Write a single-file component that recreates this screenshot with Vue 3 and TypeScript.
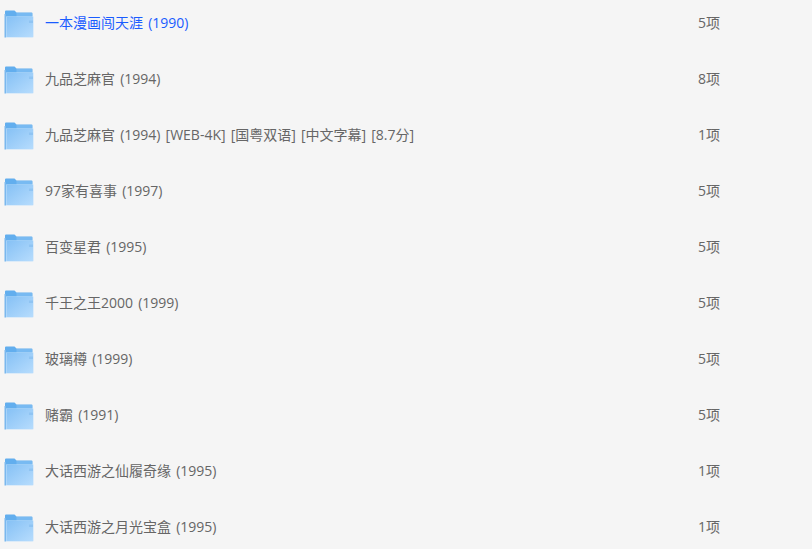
<script setup lang="ts">
interface Folder {
  name: string
  count: string
  hover?: boolean
}

const folders: Folder[] = [
  { name: '一本漫画闯天涯 (1990)', count: '5项', hover: true },
  { name: '九品芝麻官 (1994)', count: '8项' },
  { name: '九品芝麻官 (1994) [WEB-4K] [国粤双语] [中文字幕] [8.7分]', count: '1项' },
  { name: '97家有喜事 (1997)', count: '5项' },
  { name: '百变星君 (1995)', count: '5项' },
  { name: '千王之王2000 (1999)', count: '5项' },
  { name: '玻璃樽 (1999)', count: '5项' },
  { name: '赌霸 (1991)', count: '5项' },
  { name: '大话西游之仙履奇缘 (1995)', count: '1项' },
  { name: '大话西游之月光宝盒 (1995)', count: '1项' },
]
</script>

<template>
  <div class="list">
    <div v-for="f in folders" :key="f.name" class="row">
      <svg class="icon" width="30" height="28" viewBox="0 0 30 28">
        <defs>
          <linearGradient id="front" x1="0" y1="0" x2="1" y2="1">
            <stop offset="0" stop-color="#86c1f5" />
            <stop offset="1" stop-color="#b6dcfd" />
          </linearGradient>
        </defs>
        <path d="M1 27V1.500q0-1 1-1h8.500l2 2h15q1 0 1 1V7H2z" fill="#62aeee" />
        <path d="M12.500 3h15.500v4H12.500z" fill="#78baf2" />
        <path d="M0.500 4H2v23.500H0.500z" fill="#7ab8ee" />
        <path d="M2 6.500h27.500v20q0 1-1 1H2z" fill="#c3e1fb" />
        <path d="M2.500 7h26.500v20H2.500z" fill="url(#front)" />
        <path d="M25 10.500h4v2.500h-4z" fill="#8fc4f3" />
      </svg>
      <span class="name" :class="{ hover: f.hover }">{{ f.name }}</span>
      <span class="count">{{ f.count }}</span>
    </div>
  </div>
</template>

<style scoped>
.list {
  width: 812px;
  height: 549px;
  overflow: hidden;
  background: #f5f5f5;
  font-family: "Open Sans", "Noto Sans CJK SC", sans-serif;
  font-size: 14px;
  color: #666;
}

.row {
  display: flex;
  align-items: center;
  height: 56px;
  margin-top: -6px;
  margin-bottom: 6px;
  padding-left: 4px;
}

.icon {
  flex: none;
  margin-top: 3px;
}

.name {
  width: 653px;
  margin-left: 11px;
  white-space: nowrap;
  word-spacing: 1.5px;
}

.hover {
  color: #1a5cff;
}

.count {
  white-space: nowrap;
}
</style>

<style>
html,
body {
  background: #f5f5f5;
  overflow: hidden;
}
</style>
